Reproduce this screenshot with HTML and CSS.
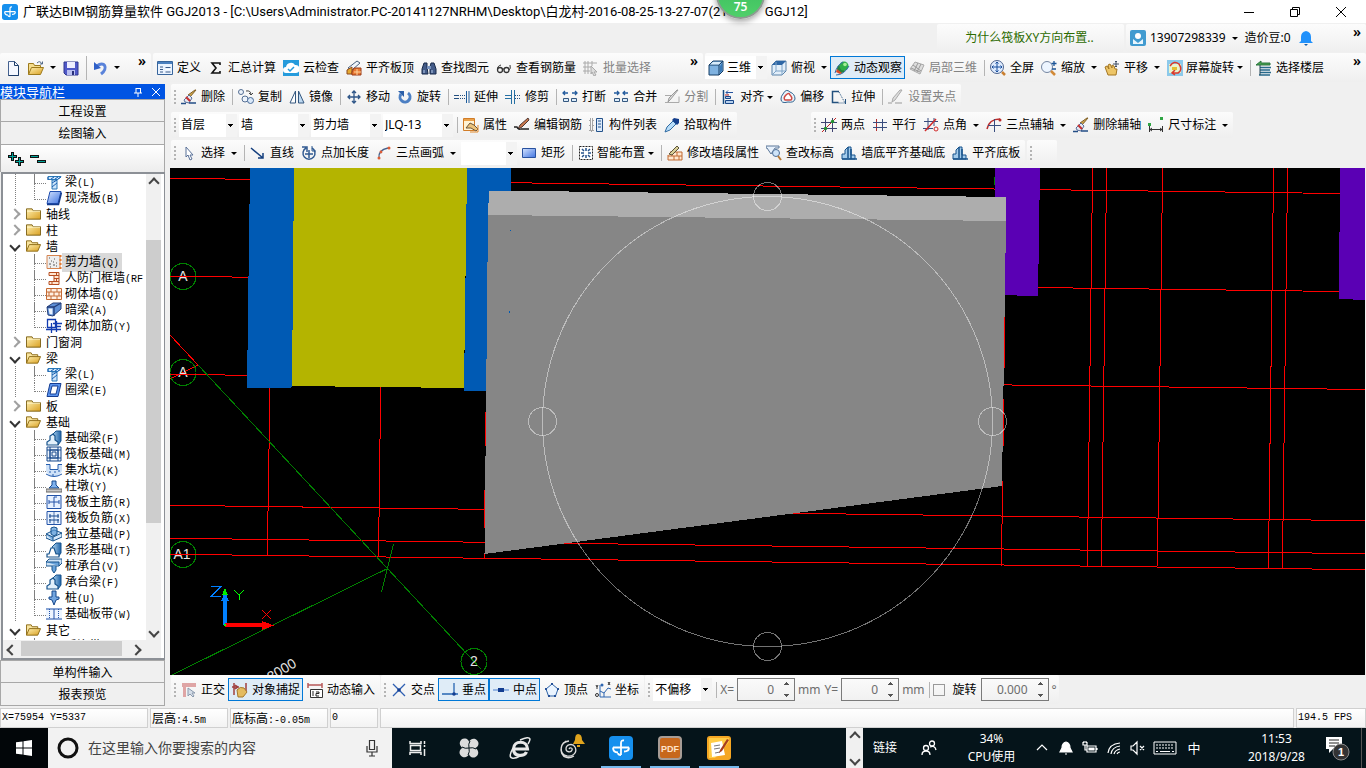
FILE: index.html
```html
<!DOCTYPE html>
<html lang="zh-CN">
<head>
<meta charset="utf-8">
<title>广联达BIM钢筋算量软件 GGJ2013</title>
<link rel="stylesheet" href="styles.css">
</head>
<body>
<svg class="sprite" aria-hidden="true">
<defs>
<linearGradient id="g-fold" x1="0" y1="0" x2="1" y2="1"><stop offset="0" stop-color="#fff0b0"/><stop offset="1" stop-color="#d9a022"/></linearGradient>
<linearGradient id="g-blue" x1="0" y1="0" x2="1" y2="1"><stop offset="0" stop-color="#d5e4ff"/><stop offset="1" stop-color="#3f73e0"/></linearGradient>
<linearGradient id="g-steel" x1="0" y1="0" x2="1" y2="0"><stop offset="0" stop-color="#b5d9f2"/><stop offset="1" stop-color="#1d62a8"/></linearGradient>
</defs>
<symbol id="logo" viewBox="0 0 24 24"><rect width="24" height="24" rx="4" fill="#1690ee"/><path d="M15 4.500Q12 4 12 7v12M4 11.500h16M4 11.500q0 5 5 5M20 11.500q0 4-5 4M12 19q-3 0-3-2" fill="none" stroke="#fff" stroke-width="1.800"/></symbol>
<symbol id="new" viewBox="0 0 16 16"><path d="M3.500 1.500h6l4 4v10h-10z" fill="#f5f8ff" stroke="#44618f"/><path d="M9.500 1.500v4h4M13.500 6v9.500h-10" fill="none" stroke="#1d3c68"/></symbol>
<symbol id="open" viewBox="0 0 16 16"><path d="M.5 14.500v-11h5l1 2h6v3" fill="#f5dd8d" stroke="#9d7a1c"/><path d="M.5 14.500l3-7h12l-3 7z" fill="url(#g-fold)" stroke="#9d7a1c"/><path d="M9 3q3-3 5 1M12 4h2.500V1.500" fill="none" stroke="#536a88"/></symbol>
<symbol id="save" viewBox="0 0 16 16"><path d="M1 2h14v13H3l-2-2z" fill="#4f58c8" stroke="#30378e"/><path d="M4 2h8v6H4z" fill="#eef"/><path d="M4 10h8v5H4z" fill="#b9bff0"/><path d="M9 11h2v4H9z" fill="#272e78"/></symbol>
<symbol id="undo" viewBox="0 0 16 16"><path d="M5 6c7-6 12 2 4 8" fill="none" stroke="#5a83da" stroke-width="3"/><path d="M2 2v8l7-2z" fill="#2f60c8"/></symbol>
<symbol id="form" viewBox="0 0 16 16"><path d="M.5 1.500h15v13H.5z" fill="#eaf3ff" stroke="#37659c"/><path d="M1 2h14v2H1z" fill="#4a80bf"/><path d="M3 7h3M3 9.500h3M3 12h3M8.500 7.500h5M8.500 12h5" stroke="#3a5a88"/><path d="M8.500 9.500h5" stroke="#fff"/></symbol>
<symbol id="sigma" viewBox="0 0 16 16"><path d="M12 5V3H4l4 5-4 5h8v-2" fill="none" stroke="#111" stroke-width="1.600"/></symbol>
<symbol id="cloud" viewBox="0 0 16 16"><path d="M0 0h16v16H0z" fill="#259bdc"/><path d="M3 13a3 3 0 0 1 0-6 5 5 0 0 1 9-2 4 4 0 0 1 1 8z" fill="#fff"/><path d="M5 9l2 2 4-4" stroke="#259bdc" stroke-width="1.500" fill="none"/></symbol>
<symbol id="flush" viewBox="0 0 16 16"><path d="M2 8l9-7 3 2-8 7z" fill="#eef4fb" stroke="#49617e"/><path d="M1 10l5-3v7H1z" fill="#e5aa32" stroke="#8d481c"/><path d="M8 8h7v7H6v-3z" fill="#e87a35" stroke="#993b18"/><path d="M8 12h7M11 9v6" stroke="#ffd49e"/></symbol>
<symbol id="find" viewBox="0 0 16 16"><path d="M3 3h3v4l1 7H1V9zM10 3h3l2 6v5H9V7z" fill="#435b88" stroke="#172948"/><path d="M6 6h4v3H6z" fill="#7892be"/><path d="M3 10v3M11 10v3" stroke="#b7cbe8"/></symbol>
<symbol id="glasses" viewBox="0 0 16 16"><circle cx="4" cy="10" r="2.500" fill="none" stroke="#333" stroke-width="1.300"/><circle cx="10.500" cy="10" r="2.500" fill="none" stroke="#333" stroke-width="1.300"/><path d="M1.500 10Q1 6 5 5M13 10q2-1 1-5M6 9h2" fill="none" stroke="#333"/></symbol>
<symbol id="batch" viewBox="0 0 16 16"><path d="M2 1v13M5 1v13M0 3h14M0 7h9M0 11h7M9 1v5" stroke="#aaa" fill="none"/><path d="M8 6l6 6h-3l2 3-2 1-2-4-1 2z" fill="#ddd" stroke="#aaa"/></symbol>
<symbol id="cube" viewBox="0 0 16 16"><path d="M1 5l4-4h10v10l-4 4H1z" fill="#7fb2e0" stroke="#163e66"/><path d="M1 5h10v10M11 5l4-4" fill="none" stroke="#163e66"/><path d="M2 4.500L5 2h8l-2 2.500z" fill="#d9ecfa"/><path d="M12 6l2-3v8l-2 2z" fill="#3879b8"/></symbol>
<symbol id="cubetop" viewBox="0 0 16 16"><path d="M1 5l4-4h10v10l-4 4H1z" fill="#e3effa" stroke="#5881a8"/><path d="M1 5l4-4h10l-4 4z" fill="#2d66a5"/><path d="M11 5v10M5 2v9h9M5 11l-4 4" stroke="#7ea4c7" fill="none"/></symbol>
<symbol id="orbit" viewBox="0 0 16 16"><circle cx="7" cy="9" r="4" fill="#27803f"/><circle cx="10" cy="6" r="4.500" fill="#2fae48"/><circle cx="11" cy="4.500" r="1.800" fill="#a6ef98"/><path d="M1 13Q3 5 9 2M2 15q8 0 13-9" fill="none" stroke="#326da8"/><path d="M3 9l5 4-2 1-4-2z" fill="#d94b28"/></symbol>
<symbol id="local" viewBox="0 0 16 16"><path d="M1 9l5-7 9 3-4 9z" fill="#ddd" stroke="#aaa"/><path d="M4 5l8 6M9 3L5 11M12 4l-4 8M2 8l9 4" stroke="#999"/></symbol>
<symbol id="full" viewBox="0 0 16 16"><circle cx="7" cy="7" r="6.500" fill="#dfecff" stroke="#50658d"/><path d="M7 2v10M2 7h10M5.500 3.500L7 2l1.500 1.500M5.500 10.500L7 12l1.500-1.500M3.500 5.500L2 7l1.500 1.500M10.500 5.500L12 7l-1.500 1.500" stroke="#194f9d" fill="none"/><path d="M12 12l3 3" stroke="#c98032" stroke-width="2.500"/></symbol>
<symbol id="zoomi" viewBox="0 0 16 16"><circle cx="6" cy="7" r="5.500" fill="#edf5ff" stroke="#7485a0"/><path d="M10 11l4 4" stroke="#d28a37" stroke-width="2.500"/><path d="M13 1v5M10.500 3.500h5M11 9h4" stroke="#1b5497" stroke-width="1.300"/></symbol>
<symbol id="hand" viewBox="0 0 16 16"><path d="M1 7l2-1 2 3-1-4 2-1 2 4 0-3 2 1 1 3 2 0-1 6H4z" fill="#edc567" stroke="#a47622"/><path d="M12 1v6M9 4h6M11 2l1-1 1 1M11 6l1 1 1-1" stroke="#3e4d63" fill="none"/></symbol>
<symbol id="screen" viewBox="0 0 16 16"><path d="M0 0h16v16H0z" fill="#8cc9ea"/><path d="M2 4h12v9H2z" fill="#e8f4cf"/><path d="M3 6q4-6 9-2 4 6-1 9H6M8 10l-3 3 3 2" fill="none" stroke="#db392b" stroke-width="1.500"/><path d="M5 7h5v3H5z" fill="#e4bf33"/></symbol>
<symbol id="floors" viewBox="0 0 16 16"><path d="M0 5l5-4v2h9v2z" fill="#45a34b" stroke="#2c7440"/><path d="M4 7.500h11M4 10h10M4 12.500h11M3 15h11" stroke="#276a8c" stroke-width="1.300"/><path d="M4 5v10" stroke="#245"/></symbol>
<symbol id="brush" viewBox="0 0 16 16"><path d="M15 1l-6 7-2-2 7-5z" fill="#cda44b" stroke="#816129"/><path d="M8 6l3 3-3 5-4-1-1-2z" fill="#e5e8f1" stroke="#586e9a"/><path d="M5 8l4 4" stroke="#c52e2e" stroke-width="2"/><path d="M0 14.500h5M8 14h7" stroke="#234e86" stroke-width="1.500"/></symbol>
<symbol id="copy" viewBox="0 0 16 16"><circle cx="3" cy="3" r="2.500" fill="#edf3fb" stroke="#556f94"/><circle cx="7" cy="10" r="3" fill="#edf3fb" stroke="#556f94"/><circle cx="12.500" cy="11.500" r="3" fill="#d9e8f8" stroke="#496b98"/><path d="M8 2q5-1 5 4M11 4l2 2 2-2" fill="none" stroke="#444"/></symbol>
<symbol id="mirror" viewBox="0 0 16 16"><path d="M6.500 2v12H1z" fill="#fff" stroke="#34577f"/><path d="M9.500 2v12H15z" fill="#bfdaf2" stroke="#34577f"/></symbol>
<symbol id="move" viewBox="0 0 16 16"><path d="M8 2v12M2 8h12M6 4l2-2 2 2M6 12l2 2 2-2M4 6L2 8l2 2M12 6l2 2-2 2" fill="none" stroke="#2f5688" stroke-width="1.300"/></symbol>
<symbol id="rotate" viewBox="0 0 16 16"><path d="M4 5a5 5 0 1 0 7-1" fill="none" stroke="#4c7fc3" stroke-width="3"/><path d="M1 2h6v6z" fill="#2c5fa8"/></symbol>
<symbol id="extend" viewBox="0 0 16 16"><path d="M0 6.500h5M0 9.500h5" stroke="#234f80"/><path d="M6 6.500h5M6 9.500h5" stroke="#234f80" stroke-dasharray="1 1"/><path d="M12.500 2v12M15 2v12" stroke="#1f5d9c"/></symbol>
<symbol id="trim" viewBox="0 0 16 16"><path d="M0 6.500h6M0 9.500h6M6.500 1v14M9.500 1v14" stroke="#2670a3"/><path d="M10 6.500h6M10 9.500h6" stroke="#234f80" stroke-dasharray="1 1"/></symbol>
<symbol id="break" viewBox="0 0 16 16"><path d="M1 4h5M3 2L1 4l2 2M10 4h5M13 2l2 2-2 2" fill="none" stroke="#245c9e" stroke-width="1.300"/><path d="M1.500 9.500h5v3h-5zM9.500 9.500h5v3h-5z" fill="#dcecfa" stroke="#34577f"/></symbol>
<symbol id="merge" viewBox="0 0 16 16"><path d="M1 4h5M4 2l2 2-2 2M10 4h5M12 2l-2 2 2 2" fill="none" stroke="#245c9e" stroke-width="1.300"/><path d="M1.500 9.500h5v3h-5zM9.500 9.500h5v3h-5z" fill="#dcecfa" stroke="#34577f"/></symbol>
<symbol id="split" viewBox="0 0 16 16"><path d="M1 6.500h8M1 13.500h14v-6" fill="none" stroke="#aaa"/><path d="M14 1L6 11l-2 2 1-4 8-8z" fill="#ddd" stroke="#999"/></symbol>
<symbol id="align" viewBox="0 0 16 16"><path d="M2.500 1v14" stroke="#134a80" stroke-width="1.500"/><path d="M5 3.500h7M7 1.500l-2 2 2 2" fill="none" stroke="#2453a0"/><path d="M4.500 7.500h5v2h-5zM4.500 11.500h8v3h-8z" fill="#b7d1ee" stroke="#174688"/><path d="M4 6h4" stroke="#b22"/></symbol>
<symbol id="offset" viewBox="0 0 16 16"><path d="M3 5q3-6 7-2 5 2 5 7-1 4-7 3-7 2-7-3 0-3 2-5z" fill="#eaf2fa" stroke="#31648f"/><path d="M6 6q3-3 4 0 3 3 1 5H5Q3 9 6 6z" fill="#fff" stroke="#cf4a43" stroke-width="1.500"/></symbol>
<symbol id="stretch" viewBox="0 0 16 16"><path d="M8 2.500H1.500v11h6" fill="none" stroke="#23517e" stroke-width="1.500"/><path d="M8 3l6 11H7" fill="none" stroke="#23517e" stroke-dasharray="1 1"/><path d="M14.500 10v5" stroke="#23517e"/></symbol>
<symbol id="gripi" viewBox="0 0 16 16"><path d="M0 14h4M7 14h7" stroke="#999"/><path d="M14 1L7 11l-3 2 1-4 7-8z" fill="#ddd" stroke="#aaa"/></symbol>
<symbol id="props" viewBox="0 0 16 16"><path d="M.5 1.500h11v12H.5z" fill="#fff3d4" stroke="#d17c27"/><path d="M1 2h10v2H1z" fill="#eaa14a"/><path d="M3 11l4-5 4 2 4 4-2 2-5-3z" fill="#ecc37b" stroke="#6a5438"/><path d="M7 15h8V8" fill="none" stroke="#e38b2c"/></symbol>
<symbol id="pen" viewBox="0 0 16 16"><path d="M4 12l2-4L14 1l1 2-7 7z" fill="#c9774c" stroke="#503a35"/><path d="M0 10h3q1 3 4 2h8" fill="none" stroke="#222" stroke-width="1.300"/></symbol>
<symbol id="list" viewBox="0 0 16 16"><path d="M1 2h3v3H1zM1 7h3v3H1zM1 12h3v2H1z" fill="none" stroke="#555" stroke-dasharray="1 1"/><path d="M7.500 1.500h6v13h-6z" fill="#dceafa" stroke="#24528b"/><path d="M9 4h3M9 7h3M9 10h3" stroke="#24528b"/></symbol>
<symbol id="pick" viewBox="0 0 16 16"><path d="M3 10l6-6 3 3-6 6-5 2z" fill="#b7dcf8" stroke="#2f6ba2"/><path d="M8 3l2-2 5 1 0 4-2 2z" fill="#143e8c"/></symbol>
<symbol id="twopt" viewBox="0 0 16 16"><path d="M4.500 1v14M11.500 1v14M0 5.500h16M0 11.500h16" stroke="#3f4370"/><path d="M1 15L15 1" stroke="#c02020"/><circle cx="4.500" cy="11.500" r="1.700" fill="#209330"/><circle cx="11.500" cy="4.500" r="1.700" fill="#209330"/></symbol>
<symbol id="grid" viewBox="0 0 16 16"><path d="M4.500 2v12" stroke="#b22c2c"/><path d="M10.500 2v12M1 5.500h14M1 10.500h14" stroke="#394d7e"/></symbol>
<symbol id="angle" viewBox="0 0 16 16"><path d="M5 1v12M11 1v8M1 4.500h14M0 11.500h10" stroke="#394d7e"/><path d="M2 14L13 2" stroke="#d12a2a" stroke-width="1.500"/><circle cx="13" cy="12" r="2" fill="none" stroke="#d12a2a"/></symbol>
<symbol id="arcaxis" viewBox="0 0 16 16"><path d="M1 12Q3 2 14 2" fill="none" stroke="#bb2b2b" stroke-width="1.500"/><path d="M8.500 2v13M2 8.500h13" stroke="#394d7e"/><circle cx="14" cy="3" r="1.500" fill="#bb2b2b"/></symbol>
<symbol id="dim" viewBox="0 0 16 16"><path d="M1.500 9v6M14.500 9v6M2 12.500h12M4 11l-2 1.500L4 14M12 11l2 1.500-2 1.500" fill="none" stroke="#333"/><path d="M0 6h3v3H0zM12 0h3v3h-3z" fill="#2fa544"/></symbol>
<symbol id="arrow" viewBox="0 0 16 16"><path d="M5 2v10l2-2 2 5 2-1-2-4h3z" fill="#fff" stroke="#597098"/></symbol>
<symbol id="line" viewBox="0 0 16 16"><path d="M1 3l12 10M13 8v5H8" fill="none" stroke="#133e7d" stroke-width="1.500"/></symbol>
<symbol id="ptlen" viewBox="0 0 16 16"><path d="M5 3a6 6 0 1 0 6 0M1 2h5v5M8 5v8M4 9h8" fill="none" stroke="#315a91" stroke-width="1.500"/><path d="M11 1v5h4" fill="none" stroke="#315a91"/></symbol>
<symbol id="arc" viewBox="0 0 16 16"><path d="M3 13Q2 5 12 3" fill="none" stroke="#46618c" stroke-width="1.300"/><circle cx="3" cy="13" r="1.500" fill="#dc5c36"/><circle cx="13" cy="3" r="1.500" fill="#dc5c36"/><circle cx="5" cy="7" r="1.400" fill="#dc5c36"/></symbol>
<symbol id="rect" viewBox="0 0 16 16"><path d="M1.500 3.500h13v9h-13z" fill="url(#g-blue)" stroke="#28519f"/></symbol>
<symbol id="smart" viewBox="0 0 16 16"><path d="M1.500 1.500h13v13h-13z" fill="#fff" stroke="#222" stroke-dasharray="2 1"/><path d="M8 3v3M8 10v3M3 8h3M10 8h3M4 4l2 2M12 4l-2 2M4 12l2-2M12 12l-2-2" stroke="#24528b" stroke-width="1.500"/></symbol>
<symbol id="wallmod" viewBox="0 0 16 16"><path d="M3 7h12v8H1v-5" fill="#ffe8d0" stroke="#c26a33"/><path d="M1 11h14M5 7v4M10 7v4M7 11v4M12 11v4" stroke="#c26a33"/><path d="M2 9l8-8 2 2-7 7z" fill="#d8ce97" stroke="#5b543b"/></symbol>
<symbol id="elev" viewBox="0 0 16 16"><path d="M0 1h13v2H9l-4 6-4-6H0z" fill="#e7f1fc" stroke="#5b7698"/><circle cx="10" cy="8" r="3.500" fill="#cfe4f8" stroke="#4e6f97"/><path d="M12 11l3 4" stroke="#b77a36" stroke-width="2"/></symbol>
<symbol id="base" viewBox="0 0 16 16"><path d="M1 14V9h3V5l3-3h3v8h4v4z" fill="#a3cbeb" stroke="#17538c"/><path d="M7 2v11M10 4v10M1 14h15" stroke="#17538c" stroke-width="1.500"/></symbol>
<symbol id="ortho" viewBox="0 0 16 16"><path d="M1 1h14v4H5v10H2V5H1z" fill="#dfa5a5"/><path d="M7 6v8l2-2 3 3 1-1-2-3h3z" fill="#d6dee8" stroke="#8b9aae"/></symbol>
<symbol id="snap" viewBox="0 0 16 16"><path d="M2 1v12M14 1v8M0 5h7M3 3l3 2-3 2" stroke="#a14040" fill="none" stroke-width="1.500"/><path d="M5 8q3-4 7-2l3 4-4 5H6z" fill="#e4bc61" stroke="#a5792d"/></symbol>
<symbol id="dyn" viewBox="0 0 16 16"><path d="M1 1v5M15 1v5M1 3h14" stroke="#b85a5a" stroke-width="1.500"/><path d="M3.500 7.500h12v8h-12z" fill="#fff" stroke="#333"/><path d="M6 9v5M9 10h3v1.500H9V14h3" fill="none" stroke="#222"/></symbol>
<symbol id="cross" viewBox="0 0 16 16"><path d="M2 2l12 12M14 2L2 14" stroke="#2f60b2" stroke-width="1.300"/><circle cx="8" cy="8" r="1.800" fill="#123d91"/></symbol>
<symbol id="perp" viewBox="0 0 16 16"><path d="M12 1v11M0 12h16" stroke="#2765b2" stroke-width="1.300"/><circle cx="12" cy="12" r="1.800" fill="#123d91"/></symbol>
<symbol id="mid" viewBox="0 0 16 16"><path d="M0 8h16" stroke="#7da3dc" stroke-width="1.500"/><path d="M5 6h6v4H5z" fill="#123d91"/></symbol>
<symbol id="vertex" viewBox="0 0 16 16"><path d="M8 2l6 5-2.500 7h-7L2 7z" fill="#eaf4ff" stroke="#2d62a7"/><path d="M7 1h2v2H7zM1 6h2v2H1zM13 6h2v2h-2zM4 13h2v2H4zM10 13h2v2h-2z" fill="#234f97"/></symbol>
<symbol id="coord" viewBox="0 0 16 16"><path d="M5 3v12h11M5 9l4 2 4-5M9 11v4M13 6l3 1" fill="none" stroke="#2d65b0"/><path d="M1 3l1 2 1-2M2 5v2M13 0l2 3M15 0l-2 3" stroke="#333" fill="none"/><circle cx="2" cy="13" r="1.500" fill="none" stroke="#333"/><circle cx="7" cy="3" r="1.500" fill="#2d65b0"/></symbol>
<symbol id="folder" viewBox="0 0 16 16"><path d="M.5 13.500v-11h6l1 2h8v9z" fill="url(#g-fold)" stroke="#7c6015"/><path d="M1 5h14" stroke="#fff5c9"/></symbol>
<symbol id="folderopen" viewBox="0 0 16 16"><path d="M.5 13.500v-11h5l1 2h6v3" fill="#f8e49f" stroke="#8c6a14"/><path d="M.5 13.500l3-7h12l-3 7z" fill="url(#g-fold)" stroke="#8c6a14"/></symbol>
<symbol id="beam" viewBox="0 0 16 16"><path d="M2 2.500h13l-3 3H2zM6 6h5v9H6z" fill="#cde6fb" stroke="#2a78b8"/><path d="M12 5l3-2M6 9l5-3M6 13l5-4M5 5l3-2M9 5l3-2M2 3v3" stroke="#1a5fb0"/></symbol>
<symbol id="slab" viewBox="0 0 16 16"><path d="M4 1.500h11l-3 12H1z" fill="url(#g-blue)" stroke="#204dad"/><path d="M1 14.500h11.500l3-12" fill="none" stroke="#133b8e" stroke-width="1.500"/></symbol>
<symbol id="ring" viewBox="0 0 16 16"><path d="M4 1.500h11l-3 13H1z" fill="#5b94ee" stroke="#153d91"/><path d="M6 4h6l-2 8H4z" fill="#fff" stroke="#153d91"/></symbol>
<symbol id="shear" viewBox="0 0 16 16"><path d="M1 1.500h13v13H1z" fill="#eee" stroke="#d58450"/><path d="M3 4h1M8 5h1M5 7h1M10 9h1M3 10h2M7 11h2M4 13h1M10 12h1M7 8h1" stroke="#555"/><path d="M14.500 1v15" stroke="#e57b2f" stroke-width="2" stroke-dasharray="2 2"/></symbol>
<symbol id="frame" viewBox="0 0 16 16"><path d="M3 2.500h10v12H3v-3h5v-6H3z" fill="#ffe6d0" stroke="#b74e20"/><path d="M8 5.500h5M8 8.500h5M8 11.500h5M10.500 2v3M6 12v3M10.500 9v3" stroke="#b74e20"/></symbol>
<symbol id="brick" viewBox="0 0 16 16"><path d="M.5 2.500h15v11H.5z" fill="#fff0e2" stroke="#c46a34"/><path d="M1 6h14M1 10h14M5 2v4M11 2v4M3 6v4M8 6v4M13 6v4M5 10v4M11 10v4" stroke="#c46a34"/></symbol>
<symbol id="hidden" viewBox="0 0 16 16"><path d="M1 5l6-4h8v6l-8 7-5-1z" fill="#5d8fd6" stroke="#233e79"/><path d="M1 5h7l7-4M8 5v9" fill="none" stroke="#233e79" stroke-width="1.300"/><path d="M2.500 6.500h4v6l-3-.5z" fill="#eaf2fc"/></symbol>
<symbol id="rebar" viewBox="0 0 16 16"><path d="M1.500 1.500h8v8h-8zM0 11.500h15M5.500 5v10M10.500 3v11M7 5.500h9M10 8.500h5" stroke="#123cb0" fill="none" stroke-width="1.300"/></symbol>
<symbol id="fbeam" viewBox="0 0 16 16"><path d="M6 5l4-4h5v10l-3 4z" fill="url(#g-steel)" stroke="#17538c"/><path d="M1 15v-3l3-2V6l3-2 2 2v4l3 2v3z" fill="#e2f0fb" stroke="#17538c" stroke-width="1.200"/></symbol>
<symbol id="raft" viewBox="0 0 16 16"><path d="M1 1h14v14H1zM4 4h8v8H4zM4 1v14M12 1v14M1 4h14M1 12h14M6 6h4v4H6z" fill="#dceafa" fill-opacity=".5" stroke="#17488c"/></symbol>
<symbol id="pit" viewBox="0 0 16 16"><path d="M0 2h4v5h8V2h4v7q-3 6-8 6T0 9z" fill="#cfe2f8"/><path d="M0 2.500h4v5h8v-5h4M0 12q8 5 16 0" stroke="#255dae" fill="none"/><path d="M3 10h2M8 10h2M12 9h2M6 13h2" stroke="#255dae"/></symbol>
<symbol id="pier" viewBox="0 0 16 16"><path d="M6 3h4v4l3 3H3l3-3z" fill="#7fb2ee" stroke="#17488c"/><path d="M0 11h16v3H0z" fill="#c6c6c6" stroke="#666"/></symbol>
<symbol id="mainbar" viewBox="0 0 16 16"><path d="M1 1.500h14v13H1z" fill="#e7f1ff" stroke="#2253a8"/><path d="M3 8h10M8 3v10M3 6v4M13 6v4M8 3h3" stroke="#2253a8" fill="none"/></symbol>
<symbol id="negbar" viewBox="0 0 16 16"><path d="M1 1.500h14v13H1z" fill="#e7f1ff" stroke="#2253a8"/><path d="M7 2h2v12H7z" fill="#9eb4d6"/><path d="M3 6h10M3 10h10M4 4v4M12 4v4M4 9v4M12 9v4" stroke="#17488c"/></symbol>
<symbol id="isol" viewBox="0 0 16 16"><path d="M0 8l8-4 8 3v4l-9 4-7-3z" fill="#d6e9fa" stroke="#17538c"/><path d="M5 2l3-1 3 1v6l-3 2-3-2zM7 11l9-4M0 8l7 3v4" fill="#5899d5" fill-opacity=".7" stroke="#17538c"/></symbol>
<symbol id="strip" viewBox="0 0 16 16"><path d="M6 5l4-4h5v10l-3 4z" fill="url(#g-steel)" stroke="#17538c"/><path d="M1 15v-3h2l2-6h3l2 6h3v3z" fill="#fff" stroke="#17538c" stroke-width="1.200"/></symbol>
<symbol id="cap" viewBox="0 0 16 16"><path d="M0 4l3-3h13v4l-3 3H0z" fill="#cfe3f6" stroke="#17538c"/><path d="M0 4h13v4M6 8v4l2 3 2-3V8" fill="#6aa3da" stroke="#17538c"/></symbol>
<symbol id="pile" viewBox="0 0 16 16"><path d="M6 1h4v6h3v2l-3 1-2 5-2-5-3-1V7h3z" fill="#72a5df" stroke="#17488c"/></symbol>
<symbol id="band" viewBox="0 0 16 16"><path d="M0 2h16v12H0z" fill="#edf5ff"/><path d="M0 3h16M0 13h16M8 3v10" stroke="#2253a8"/><path d="M3.500 3v10M12.500 3v10" stroke="#2253a8" stroke-dasharray="1 1"/></symbol>
</svg>

<div class="app">
<header class="titlebar">
  <svg class="ico"><use href="#logo"/></svg>
  <h1><span>广联达BIM钢筋算量软件 GGJ2013 - [C:\Users\Administrator.PC-20141127NRHM\Desktop\白龙村-2016-08-25-13-27-07(216</span><span>GGJ12]</span></h1>
  <span class="badge">75</span>
  <div class="winbtns">
    <button aria-label="最小化"><svg viewBox="0 0 12 12"><path d="M1 6.500h10"/></svg></button>
    <button aria-label="还原"><svg viewBox="0 0 12 12"><path d="M1.500 3.500h7v7h-7zM3.500 3.500v-2h7v7h-2"/></svg></button>
    <button aria-label="关闭"><svg viewBox="0 0 12 12"><path d="M1 1l10 10M11 1L1 11"/></svg></button>
  </div>
</header>

<div class="bar menubar">
  <a class="group tip" href="#">为什么筏板XY方向布置..</a>
  <div class="group account">
    <button class="tool"><svg class="ico" viewBox="0 0 16 16"><rect width="16" height="16" rx="2" fill="#419bd0"/><circle cx="8" cy="6" r="3" fill="#fff"/><path d="M3 9l5 4 5-4v5H3z" fill="#e8f5fd"/></svg>13907298339<i class="caret"></i></button>
    <button class="tool">造价豆:0</button>
    <button class="tool" aria-label="消息"><svg class="ico" viewBox="0 0 16 16"><path d="M8 1q5 1 5 6v4l2 2H1l2-2V7q0-5 5-6z" fill="#2191fb"/><path d="M6 14h4l-2 2z" fill="#135fac"/></svg></button>
    <button class="more">»</button>
  </div>
</div>

<div class="bar mainbar">
  <div class="group file">
    <button class="tool" aria-label="新建"><svg class="ico"><use href="#new"/></svg></button>
    <button class="tool" aria-label="打开"><svg class="ico"><use href="#open"/></svg><i class="caret"></i></button>
    <button class="tool" aria-label="保存"><svg class="ico"><use href="#save"/></svg></button>
    <i class="sep"></i>
    <button class="tool" aria-label="撤销"><svg class="ico"><use href="#undo"/></svg><i class="caret"></i></button>
    <button class="more">»</button>
  </div>
  <div class="group calc">
    <button class="tool"><svg class="ico"><use href="#form"/></svg>定义</button>
    <button class="tool"><svg class="ico"><use href="#sigma"/></svg>汇总计算</button>
    <button class="tool"><svg class="ico"><use href="#cloud"/></svg>云检查</button>
    <button class="tool"><svg class="ico"><use href="#flush"/></svg>平齐板顶</button>
    <button class="tool"><svg class="ico"><use href="#find"/></svg>查找图元</button>
    <button class="tool"><svg class="ico"><use href="#glasses"/></svg>查看钢筋量</button>
    <button class="tool" disabled><svg class="ico"><use href="#batch"/></svg>批量选择</button>
    <button class="more">»</button>
  </div>
  <div class="group view">
    <label class="combo with-icon"><svg class="ico"><use href="#cube"/></svg><select aria-label="视图"><option>三维</option></select></label>
    <button class="tool"><svg class="ico"><use href="#cubetop"/></svg>俯视<i class="caret"></i></button>
    <button class="tool on"><svg class="ico"><use href="#orbit"/></svg>动态观察</button>
    <button class="tool" disabled><svg class="ico"><use href="#local"/></svg>局部三维</button>
    <i class="sep"></i>
    <button class="tool"><svg class="ico"><use href="#full"/></svg>全屏</button>
    <button class="tool"><svg class="ico"><use href="#zoomi"/></svg>缩放<i class="caret"></i></button>
    <button class="tool"><svg class="ico"><use href="#hand"/></svg>平移<i class="caret"></i></button>
    <button class="tool tight"><svg class="ico"><use href="#screen"/></svg>屏幕旋转<i class="caret"></i></button>
    <i class="sep"></i>
    <button class="tool"><svg class="ico"><use href="#floors"/></svg>选择楼层</button>
    <button class="more">»</button>
  </div>
</div>

<div class="body">
<aside class="side">
  <div class="side-head"><h2>模块导航栏</h2>
    <button aria-label="固定"><svg viewBox="0 0 10 10"><path d="M3 1v5M7.500 1v5M3 1.500h4M1 6h8M5 6v4"/></svg></button>
    <button aria-label="关闭导航栏"><svg viewBox="0 0 10 10"><path d="M1 1l8 8M9 1L1 9"/></svg></button></div>
  <button class="sect">工程设置</button>
  <button class="sect">绘图输入</button>
  <div class="expand">
    <button aria-label="全部展开"><svg viewBox="0 0 18 16"><path d="M1 5.500h9M5.500 1v9M8 10.500h9M12.500 6v9" stroke="#111" stroke-width="3"/><path d="M2 5.500h7M5.500 2v7M9 10.500h7M12.500 7v7" stroke="#00a59b"/></svg></button>
    <button aria-label="全部折叠"><svg viewBox="0 0 18 16"><path d="M1 5.500h9M8 10.500h9" stroke="#111" stroke-width="3"/><path d="M2 5.500h7M9 10.500h7" stroke="#00a59b"/></svg></button>
  </div>
  <div class="treebox">
    <div class="treerow">
    <ul class="tree">
      <li><ul class="sub">
        <li><svg class="ico"><use href="#beam"/></svg><span>梁<b>(L)</b></span></li>
        <li><svg class="ico"><use href="#slab"/></svg><span>现浇板<b>(B)</b></span></li></ul></li>
      <li><div class="node"><i class="tw"></i><svg class="ico"><use href="#folder"/></svg><span>轴线</span></div></li>
      <li><div class="node"><i class="tw"></i><svg class="ico"><use href="#folder"/></svg><span>柱</span></div></li>
      <li><div class="node"><i class="tw down"></i><svg class="ico"><use href="#folderopen"/></svg><span>墙</span></div>
        <ul class="sub">
        <li class="sel"><svg class="ico"><use href="#shear"/></svg><span>剪力墙<b>(Q)</b></span></li>
        <li><svg class="ico"><use href="#frame"/></svg><span>人防门框墙<b>(RF</b></span></li>
        <li><svg class="ico"><use href="#brick"/></svg><span>砌体墙<b>(Q)</b></span></li>
        <li><svg class="ico"><use href="#hidden"/></svg><span>暗梁<b>(A)</b></span></li>
        <li><svg class="ico"><use href="#rebar"/></svg><span>砌体加筋<b>(Y)</b></span></li></ul></li>
      <li><div class="node"><i class="tw"></i><svg class="ico"><use href="#folder"/></svg><span>门窗洞</span></div></li>
      <li><div class="node"><i class="tw down"></i><svg class="ico"><use href="#folderopen"/></svg><span>梁</span></div>
        <ul class="sub">
        <li><svg class="ico"><use href="#beam"/></svg><span>梁<b>(L)</b></span></li>
        <li><svg class="ico"><use href="#ring"/></svg><span>圈梁<b>(E)</b></span></li></ul></li>
      <li><div class="node"><i class="tw"></i><svg class="ico"><use href="#folder"/></svg><span>板</span></div></li>
      <li><div class="node"><i class="tw down"></i><svg class="ico"><use href="#folderopen"/></svg><span>基础</span></div>
        <ul class="sub">
        <li><svg class="ico"><use href="#fbeam"/></svg><span>基础梁<b>(F)</b></span></li>
        <li><svg class="ico"><use href="#raft"/></svg><span>筏板基础<b>(M)</b></span></li>
        <li><svg class="ico"><use href="#pit"/></svg><span>集水坑<b>(K)</b></span></li>
        <li><svg class="ico"><use href="#pier"/></svg><span>柱墩<b>(Y)</b></span></li>
        <li><svg class="ico"><use href="#mainbar"/></svg><span>筏板主筋<b>(R)</b></span></li>
        <li><svg class="ico"><use href="#negbar"/></svg><span>筏板负筋<b>(X)</b></span></li>
        <li><svg class="ico"><use href="#isol"/></svg><span>独立基础<b>(P)</b></span></li>
        <li><svg class="ico"><use href="#strip"/></svg><span>条形基础<b>(T)</b></span></li>
        <li><svg class="ico"><use href="#cap"/></svg><span>桩承台<b>(V)</b></span></li>
        <li><svg class="ico"><use href="#fbeam"/></svg><span>承台梁<b>(F)</b></span></li>
        <li><svg class="ico"><use href="#pile"/></svg><span>桩<b>(U)</b></span></li>
        <li><svg class="ico"><use href="#band"/></svg><span>基础板带<b>(W)</b></span></li></ul></li>
      <li><div class="node"><i class="tw down"></i><svg class="ico"><use href="#folderopen"/></svg><span>其它</span></div>
        <ul class="sub"><li><i class="ico"></i><span>后浇带<b>(JD)</b></span></li><li></li></ul></li>
    </ul>
    <div class="vscroll"><i class="chev up"></i><div class="track"><div class="thumb"></div></div><i class="chev dn"></i></div>
    </div>
    <div class="hscroll"><i class="chev lf"></i><div class="track"><div class="thumb"></div></div><i class="chev rt"></i></div>
  </div>
  <button class="sect">单构件输入</button>
  <button class="sect">报表预览</button>
</aside>

<main class="main">
  <div class="bar"><div class="group"><i class="grip"></i>
    <button class="tool"><svg class="ico"><use href="#brush"/></svg>删除</button><i class="sep"></i>
    <button class="tool"><svg class="ico"><use href="#copy"/></svg>复制</button>
    <button class="tool"><svg class="ico"><use href="#mirror"/></svg>镜像</button><i class="sep"></i>
    <button class="tool"><svg class="ico"><use href="#move"/></svg>移动</button>
    <button class="tool"><svg class="ico"><use href="#rotate"/></svg>旋转</button><i class="sep"></i>
    <button class="tool"><svg class="ico"><use href="#extend"/></svg>延伸</button>
    <button class="tool"><svg class="ico"><use href="#trim"/></svg>修剪</button><i class="sep"></i>
    <button class="tool"><svg class="ico"><use href="#break"/></svg>打断</button>
    <button class="tool"><svg class="ico"><use href="#merge"/></svg>合并</button>
    <button class="tool" disabled><svg class="ico"><use href="#split"/></svg>分割</button><i class="sep"></i>
    <button class="tool tight"><svg class="ico"><use href="#align"/></svg>对齐<i class="caret"></i></button>
    <button class="tool"><svg class="ico"><use href="#offset"/></svg>偏移</button>
    <button class="tool"><svg class="ico"><use href="#stretch"/></svg>拉伸</button><i class="sep"></i>
    <button class="tool" disabled><svg class="ico"><use href="#gripi"/></svg>设置夹点</button>
  </div></div>
  <div class="bar"><div class="group"><i class="grip"></i>
    <label class="combo floor"><select aria-label="楼层"><option>首层</option></select></label>
    <label class="combo"><select aria-label="构件类别"><option>墙</option></select></label>
    <label class="combo"><select aria-label="构件类型"><option>剪力墙</option></select></label>
    <label class="combo"><select aria-label="构件"><option>JLQ-13</option></select></label><i class="sep"></i>
    <button class="tool"><svg class="ico"><use href="#props"/></svg>属性</button>
    <button class="tool"><svg class="ico"><use href="#pen"/></svg>编辑钢筋</button>
    <button class="tool"><svg class="ico"><use href="#list"/></svg>构件列表</button>
    <button class="tool"><svg class="ico"><use href="#pick"/></svg>拾取构件</button>
  </div>
  <div class="group axis"><i class="grip"></i>
    <button class="tool"><svg class="ico"><use href="#twopt"/></svg>两点</button>
    <button class="tool"><svg class="ico"><use href="#grid"/></svg>平行</button>
    <button class="tool"><svg class="ico"><use href="#angle"/></svg>点角<i class="caret"></i></button>
    <button class="tool"><svg class="ico"><use href="#arcaxis"/></svg>三点辅轴<i class="caret"></i></button>
    <button class="tool"><svg class="ico"><use href="#brush"/></svg>删除辅轴</button>
    <button class="tool"><svg class="ico"><use href="#dim"/></svg>尺寸标注<i class="caret"></i></button>
  </div></div>
  <div class="bar"><div class="group"><i class="grip"></i>
    <button class="tool"><svg class="ico"><use href="#arrow"/></svg>选择<i class="caret"></i></button><i class="sep"></i>
    <button class="tool"><svg class="ico"><use href="#line"/></svg>直线</button>
    <button class="tool"><svg class="ico"><use href="#ptlen"/></svg>点加长度</button>
    <button class="tool"><svg class="ico"><use href="#arc"/></svg>三点画弧<i class="caret"></i></button>
    <label class="combo shape"><select aria-label="绘制方式"><option></option></select></label>
    <button class="tool"><svg class="ico"><use href="#rect"/></svg>矩形</button><i class="sep"></i>
    <button class="tool tight"><svg class="ico"><use href="#smart"/></svg>智能布置<i class="caret"></i></button><i class="sep"></i>
    <button class="tool"><svg class="ico"><use href="#wallmod"/></svg>修改墙段属性</button>
    <button class="tool"><svg class="ico"><use href="#elev"/></svg>查改标高</button>
    <button class="tool"><svg class="ico"><use href="#base"/></svg>墙底平齐基础底</button>
    <button class="tool"><svg class="ico"><use href="#base"/></svg>平齐底板</button>
  </div>
  <div class="group stub"><i class="grip"></i></div></div>

  <svg class="canvas" viewBox="170 168 1195 507" preserveAspectRatio="xMinYMin slice" role="img" aria-label="三维视图">
    <g class="red">
      <path d="M170 178.300L1340 193.500M170 276.200L1340 291.500M170 374.300L1365 389.500M170 505.300L1365 520.700M170 538.200L1365 553.700M170 554.200L1365 569.700"/>
      <path d="M270 387L267.300 556M380.700 387L378.500 557M1092.600 168L1087.400 566M1106.600 168L1101.400 566M1162.600 168L1157.400 566M1273.600 168L1268.400 568M1287.600 168L1282.400 568"/>
      <path d="M170 335L198 365L170 379"/>
    </g>
    <path d="M250 168H294L292 386L291 388H247z" fill="#005ab4"/>
    <path d="M294 168H467L464 388L292 386z" fill="#b4b400"/>
    <path d="M467 168H511L508 391H464z" fill="#005ab4"/>
    <path d="M995 168H1040L1038 296L995 295zM1340 168H1366V300L1339 299z" fill="#5a00b4"/>
    <path d="M489 190.500L1006 197V221L488 215z" fill="#adadad"/>
    <path d="M488 215L1006 221L1002 486L484.500 554z" fill="#868686"/>
    <path class="red" d="M485.500 412V446M484.500 490V528M484.500 554V558M1004.500 317V368M1003.500 399V446M1002.500 481V524M1001.500 524V566"/>
    <path d="M510 230v1M509 311v2" stroke="#005ab4"/>
    <g class="green">
      <path d="M198 365L481 669M386.500 569L170 676M393.500 544L381.500 592M995 177l-1 4 1 4"/>
      <circle cx="183" cy="276.500" r="13"/><circle cx="183" cy="372.500" r="13"/><circle cx="183" cy="554.500" r="13"/><circle cx="474" cy="661.500" r="13"/>
    </g>
    <g class="orbit">
      <circle cx="767.500" cy="421.500" r="225"/><circle cx="767.500" cy="196.500" r="14"/><circle cx="542.500" cy="421.500" r="14"/><circle cx="992.500" cy="421.500" r="14"/><circle cx="767.500" cy="646.500" r="14"/>
    </g>
    <g class="labels">
      <text x="183" y="281">A</text><text x="183" y="377">A</text><text x="182" y="559">A1</text><text x="474" y="666">2</text>
      <text transform="translate(284 674) rotate(-31)">3000</text>
    </g>
    <path d="M170 276.200h26M170 374.300h26M170 554.200h26" class="red"/>
    <path d="M225 625V600" stroke="#0080ff" stroke-width="4"/><path d="M221 601l4-9 4 9z" fill="#0080ff"/><path d="M222 595l3-7 3 7z" fill="#00f000"/>
    <path d="M225 625H262" stroke="red" stroke-width="4"/><path d="M262 621v9l12-4.500z" fill="red"/><path d="M224 624h2v2h-2z" fill="#0f0"/>
    <path d="M211 586.500h10l-10 10h10" fill="none" stroke="#0080ff"/><path d="M234 590l5 5 5-5M239 595v5" fill="none" stroke="#0f0"/><path d="M262 610l9 9M271 610l-9 9" stroke="red"/>
  </svg>

  <div class="bar snapbar">
    <div class="group"><i class="grip"></i>
      <button class="tool"><svg class="ico"><use href="#ortho"/></svg>正交</button>
      <button class="tool on"><svg class="ico"><use href="#snap"/></svg>对象捕捉</button>
      <button class="tool"><svg class="ico"><use href="#dyn"/></svg>动态输入</button></div>
    <div class="group next"><i class="grip"></i>
      <button class="tool"><svg class="ico"><use href="#cross"/></svg>交点</button>
      <button class="tool on"><svg class="ico"><use href="#perp"/></svg>垂点</button>
      <button class="tool on"><svg class="ico"><use href="#mid"/></svg>中点</button>
      <button class="tool"><svg class="ico"><use href="#vertex"/></svg>顶点</button>
      <button class="tool"><svg class="ico"><use href="#coord"/></svg>坐标</button></div>
    <div class="group next"><i class="grip"></i>
      <label class="combo off"><select aria-label="偏移方式"><option>不偏移</option></select></label><i class="sep"></i>
      <label class="num">X=<span class="spin"><input value="0" disabled><i></i></span>mm</label>
      <label class="num">Y=<span class="spin"><input value="0" disabled><i></i></span>mm</label><i class="sep"></i>
      <label class="rot"><input type="checkbox">旋转</label>
      <label class="num"><span class="spin wide"><input value="0.000" aria-label="旋转角度" disabled><i></i></span>°</label></div>
  </div>
</main>
</div>

<footer class="status">
  <span class="p1">X=75954 Y=5337</span><span class="p2"><em>层高</em>:4.5m</span><span class="p3"><em>底标高</em>:-0.05m</span><span class="p4">0</span><span class="p5"></span><span class="p6">194.5 FPS</span>
</footer>

<nav class="taskbar">
  <button class="start" aria-label="开始"><svg viewBox="0 0 16 16"><path d="M0 2.300L6.500 1.400V7.500H0zM7.500 1.200L16 0v7.500H7.500zM0 8.500h6.500v6.100L0 13.700zM7.500 8.500H16V16l-8.500-1.200z" fill="#fff"/></svg></button>
  <label class="search"><svg class="cort" viewBox="0 0 22 22"><circle cx="11" cy="11" r="9" fill="none" stroke="#111" stroke-width="3"/></svg><input placeholder="在这里输入你要搜索的内容"><svg class="mic" viewBox="0 0 14 18"><path d="M4.500 1.500h5v9h-5zM2 7v6h10V7M7 13v4M4 17h6" fill="none" stroke="#333" stroke-width="1.200"/></svg></label>
  <button class="app-btn" aria-label="任务视图"><svg viewBox="0 0 24 24"><path d="M4 5V7.500h11V5M4 19v-2.500h11V19M4.500 9.500h10v5h-10zM18.500 5v3M18.500 13v7M18.500 9v2" fill="none" stroke="#eee" stroke-width="1.500"/></svg></button>
  <button class="app-btn" aria-label="浏览器"><svg viewBox="0 0 24 24"><path d="M12 12H6.500A4.800 4.800 0 1 1 12 5.500zM12 12V6.500A4.800 4.800 0 1 1 18.500 12zM12 12h5.500A4.800 4.800 0 1 1 12 18.500zM12 12v5.500A4.800 4.800 0 1 1 5.500 12z" fill="#dcdcdc"/><path d="M12 12Q8 13 5 11M12 12q-1-4 1-7M12 12q4-1 7 1M12 12q1 4-1 7" fill="none" stroke="#05141a"/></svg></button>
  <button class="app-btn" aria-label="IE"><svg viewBox="0 0 24 24"><path d="M6 13h13.500c0-9-14-9-14 0 0 8 11 8 13 3" fill="none" stroke="#e8e8e8" stroke-width="3.200"/><path d="M12 4q9-4 10-1 0 2-2 5M5 12q-5 9-1 10 3 1 8-2" fill="none" stroke="#e8e8e8" stroke-width="1.500"/></svg></button>
  <button class="app-btn" aria-label="助手"><svg class="big" viewBox="0 0 28 28"><path d="M12 15c1-2 4-1 3 1-1 3-6 2-6-1 0-5 7-6 9-2 3 6-3 10-8 9-8-2-8-14 2-15M17 22C5 29-1 13 9 7" fill="none" stroke="#ddd" stroke-width="1.300"/><path d="M21 0q4 0 4 6l3 4H16l2-4q0-6 3-6zM20 11h3v2h-3z" fill="#e0a41d"/></svg></button>
  <button class="app-btn run" aria-label="广联达"><svg viewBox="0 0 24 24"><use href="#logo"/></svg></button>
  <button class="app-btn run" aria-label="PDF"><svg viewBox="0 0 24 24"><rect x="1" y="1" width="22" height="22" rx="3" fill="#c7671b" stroke="#a79c95" stroke-width="2"/><text x="12" y="16" text-anchor="middle" class="pdf">PDF</text></svg></button>
  <button class="app-btn run" aria-label="便笺"><svg viewBox="0 0 24 24"><rect width="24" height="24" rx="3" fill="#f5a623"/><path d="M2 2h20v4L8 22H2z" fill="#ffcc45"/><path d="M4 7l11-2 3 14-13 2z" fill="#fff"/><path d="M7 10l6-1M7 13l6-1M8 17l5-1" stroke="#777"/><path d="M20 3l-7 11-1 3 3-2 7-11z" fill="#a63c1e"/></svg></button>
  <div class="linkscroll"><i class="chev up"></i><i class="chev dn"></i></div>
  <a class="links" href="#">链接</a>
  <button class="people" aria-label="人脉"><svg viewBox="0 0 18 18" fill="none" stroke="#fff" stroke-width="1.300"><circle cx="6" cy="9" r="2.500"/><path d="M2 16q0-4 4-4t4 4"/><circle cx="12" cy="4.500" r="2.500"/><path d="M10 8q5-2 6 3"/></svg></button>
  <div class="cpu"><span>34%</span><span>CPU使用</span></div>
  <div class="tray">
    <svg viewBox="0 0 16 16"><path d="M3 10l5-5 5 5"/></svg>
    <svg viewBox="0 0 16 16"><path d="M8 2q4 1 4 6l2 4H2l2-4q0-5 4-6zM7 14h2" fill="#fff"/></svg>
    <svg viewBox="0 0 16 16"><path d="M5 6h9v6H5zM15 8v2M1 2v3h4V2M3 5v5h2M2 1v2M4 1v2"/><path d="M7 8h5v2H7z" fill="#fff"/></svg>
    <svg viewBox="0 0 16 16"><path d="M2 13Q3 4 14 3M5 14q1-7 9-8M8 14q1-4 6-5M11 14q1-2 3-2"/></svg>
    <svg viewBox="0 0 16 16"><path d="M1 6h2l4-4v12l-4-4H1zM10 6l4 4M14 6l-4 4"/></svg>
  </div>
  <svg class="kb" viewBox="0 0 24 14"><path d="M1 1h22v12H1z"/><path d="M3 4h18M3 7h18" stroke-dasharray="2 1"/><path d="M3 10.500h2M7 10.500h10M19 10.500h2"/></svg>
  <span class="ime">中</span>
  <div class="clock"><span>11:53</span><span>2018/9/28</span></div>
  <button class="notif" aria-label="通知"><svg viewBox="0 0 26 26"><path d="M2 2h16v12H9l-4 4v-4H2z" fill="#fff"/><path d="M5 5h10M5 8h10M5 11h6" stroke="#222"/><circle cx="17" cy="17" r="8" fill="#333" stroke="#888"/><text x="17" y="21" text-anchor="middle" class="cnt">1</text></svg></button>
  <i class="desk"></i>
</nav>
</div>
</body>
</html>
```
FILE: styles.css
```css
* { box-sizing: border-box; }
body { margin: 0; font: 12px/16px "Noto Sans", "Noto Sans CJK SC", sans-serif; color: #000; background: #f0f0f0; }
button, input, select { font: inherit; color: inherit; margin: 0; padding: 0; border: 0; background: none; border-radius: 0; }
h1, h2 { margin: 0; font: inherit; }
a { color: inherit; text-decoration: none; }
em, i, b { font-style: normal; font-weight: normal; }
svg { display: block; flex: none; }
.sprite { position: absolute; width: 0; height: 0; }
.app { height: 100vh; display: flex; flex-direction: column; overflow: hidden; }
.ico { width: 16px; height: 16px; flex: none; }

.titlebar { position: relative; flex: none; display: flex; align-items: center; height: 23px; padding-left: 2px; gap: 5px; background: #fff; }
.titlebar h1 { flex: 1; display: flex; gap: 30px; white-space: nowrap; font: 13px/16px Roboto, "Noto Sans CJK SC", sans-serif; }
.badge { position: absolute; left: 716px; bottom: 4px; width: 49px; height: 49px; border-radius: 50%; border: 2px solid #8f9a92; background: linear-gradient(#35b558, #4fd06a); box-shadow: 0 2px 6px #0006; color: #fff; font-weight: 600; text-align: center; padding-top: 28px; line-height: 14px; }
.winbtns { display: flex; padding-right: 2px; }
.winbtns button { width: 46px; height: 20px; display: grid; place-items: center; }
.winbtns svg { width: 12px; height: 12px; fill: none; stroke: #000; }

.bar { display: flex; align-items: stretch; flex: none; height: 28px; padding: 0 0 2px 1px; white-space: nowrap; }
.group { display: flex; align-items: center; border-radius: 2px; background: linear-gradient(#fcfcfc, #efefef); padding-right: 2px; }
.menubar { height: 30px; padding: 1px 0; justify-content: flex-end; gap: 2px; }
.tip { width: 187px; justify-content: center; color: #2c6b00; }
.account { width: 240px; }
.mainbar { height: 31px; padding-left: 0; gap: 2px; }
.file { width: 151px; padding-left: 1px; }
.calc { width: 550px; }
.view { flex: 1; }
.axis { margin-left: 74px; }
.stub { width: 30px; margin-left: 2px; }
.next { margin-left: 1px; }
.more { margin-left: auto; align-self: flex-start; width: 14px; font-size: 14px; font-weight: 600; line-height: 16px; text-align: center; }

.tool { flex: none; display: flex; align-items: center; gap: 4px; height: 23px; padding: 0 2px 0 3px; border: 1px solid transparent; }
.tool:disabled { color: #838383; }
.tool.on { border-color: #0078d7; background: #dfecf7; }
.tool.tight { gap: 3px; }
.caret { flex: none; margin: 0 0 0 2px; border: 3px solid transparent; border-top-color: #000; border-bottom: 0; }
.tight .caret { margin: 0; }
.sep { flex: none; width: 1px; height: 16px; margin: 0 1px 0 4px; background: #b4b4b4; }
.file .sep { height: 24px; }
.grip { flex: none; width: 2px; height: 14px; margin: 0 1px 0 3px; background: repeating-linear-gradient(#b4b4b4 0 2px, transparent 2px 4px); }

.combo { position: relative; flex: none; display: flex; align-items: center; width: 70px; height: 23px; margin-left: 2px; background: #fff; }
.combo select { appearance: none; flex: 1; min-width: 0; height: 22px; padding-left: 2px; }
.combo::after { content: ""; position: absolute; right: 0; top: 0; width: 11px; height: 23px; background: linear-gradient(#000, #000) 2px 10px / 5px 1px no-repeat, linear-gradient(#000, #000) 3px 11px / 3px 1px no-repeat, linear-gradient(#000, #000) 4px 12px / 1px 1px no-repeat, #f3f3f3; }
.combo.floor { width: 58px; }
.combo.shape { width: 56px; }
.combo.off { width: 59px; }
.combo.with-icon { width: 62px; margin-left: 0; padding-left: 3px; }
.with-icon select { padding-left: 3px; }

.body { flex: 1; min-height: 0; display: flex; }
.side { flex: none; width: 165px; display: flex; flex-direction: column; font-family: "Noto Sans CJK SC", sans-serif; }
.side-head { display: flex; align-items: center; gap: 8px; height: 15px; padding-right: 4px; background: #0054e3; color: #fff; font-size: 13px; line-height: 14px; }
.side-head h2 { flex: 1; }
.side-head svg { width: 10px; height: 10px; fill: none; stroke: #fff; }
.sect { flex: none; height: 23px; background: #f0f0f0; border: 1px solid #a8a8a8; }
.sect + .sect { border-top: 0; }
.expand { flex: none; display: flex; align-items: center; gap: 4px; height: 27px; padding-left: 6px; background: linear-gradient(#fff, #ededed); border: 1px solid #a8a8a8; border-width: 0 1px; }
.expand svg { width: 18px; height: 16px; }
.treebox { flex: 1; min-height: 0; display: flex; flex-direction: column; margin-left: 1px; border: 2px solid #8c9096; border-right-width: 1px; background: #fff; padding-right: 3px; }
.treerow { flex: 1; min-height: 0; display: flex; }
.tree, .sub { list-style: none; margin: 0; padding: 0; }
.tree { flex: 1; min-width: 0; overflow: hidden; white-space: nowrap; }
.node { display: flex; align-items: center; height: 16px; gap: 5px; padding-left: 8px; }
.node svg { width: 15px; margin-left: 2px; }
.tw { width: 8px; height: 16px; display: grid; place-items: center; }
.tw::before, .chev::before { content: ""; width: 6px; height: 6px; border: solid #a0a0a0; border-width: 2px 2px 0 0; transform: rotate(45deg); }
.tw.down::before { border-color: #333; transform: rotate(135deg); }
.sub { margin-left: 12px; background: repeating-linear-gradient(#808080 0 1px, transparent 1px 2px) 0 0 / 1px 100% no-repeat; padding-left: 19px; }
.sub li { display: flex; align-items: center; height: 16px; }
.sub li:not(:last-child) { background: repeating-linear-gradient(#808080 0 1px, transparent 1px 2px) 0 0 / 1px 100% no-repeat; }
.sub li::before { content: ""; width: 11px; height: 9px; align-self: flex-start; border: dotted #808080; border-width: 0 0 1px 1px; }
.sub li span { padding: 0 3px; line-height: 16px; }
.sub b { font: 10px/16px "Liberation Mono", monospace; }
.sel span { background: #d9d9d9; }
.chev { display: grid; place-items: center; width: 15px; height: 17px; }
.chev::before { border-color: #444; }
.chev.up::before { transform: rotate(-45deg); }
.chev.dn::before { transform: rotate(135deg); }
.chev.lf::before { transform: rotate(-135deg); }
.vscroll { flex: none; width: 15px; display: flex; flex-direction: column; background: #f0f0f0; }
.vscroll .track { flex: 1; padding-top: 49px; }
.vscroll .thumb { height: 74%; background: #cdcdcd; }
.hscroll { flex: none; display: flex; height: 18px; background: #f0f0f0; padding: 1px 18px 1px 1px; }
.hscroll .track { flex: 1; padding: 0 6px 0 2px; }
.hscroll .thumb { height: 15px; background: #cdcdcd; }

.main { flex: 1; min-width: 0; display: flex; flex-direction: column; margin-left: 5px; }
.canvas { flex: 1; min-height: 0; width: calc(100% - 1px); background: #000; shape-rendering: crispEdges; }
.red { fill: none; stroke: #f00; }
.green { fill: none; stroke: #008000; }
.orbit { fill: none; stroke: #fff; stroke-opacity: .45; }
.labels { fill: #e4e4e4; font: 14px "Liberation Sans", sans-serif; text-anchor: middle; }
.snapbar { height: 31px; }
.num { display: flex; align-items: center; gap: 3px; margin-left: 2px; color: #6d6d6d; }
.num + .num { margin-left: 4px; }
.spin { display: flex; align-items: center; width: 58px; height: 23px; border: 1px solid #7a7a7a; }
.spin.wide { width: 68px; }
.spin input { flex: 1; min-width: 0; text-align: right; }
.spin i { width: 5px; height: 15px; margin: 0 5px 0 10px; background: conic-gradient(from 135deg at 50% 0, #555 0 90deg, transparent 0) 0 0 / 5px 3px no-repeat, conic-gradient(from -45deg at 50% 100%, #555 0 90deg, transparent 0) 0 100% / 5px 3px no-repeat; }
.rot { display: flex; align-items: center; gap: 8px; margin-left: 2px; }
.rot input { appearance: none; width: 12px; height: 12px; border: 1px solid #999; }
.rot + .num { margin-left: 4px; }

.status { flex: none; display: flex; gap: 2px; height: 22px; padding-top: 2px; background: #f0f0f0; font: 10px/18px "Liberation Mono", "Noto Sans CJK SC", monospace; }
.status em { font: 12px/18px "Noto Sans CJK SC", sans-serif; }
.status span { height: 20px; border: 1px solid #d0d0d0; padding-left: 1px; background: linear-gradient(#fff, #f3f3f3); white-space: nowrap; }
.p1 { width: 148px; } .p2 { width: 78px; } .p3 { width: 98px; } .p4 { width: 48px; } .p5 { flex: 1; } .p6 { width: 70px; }

.taskbar { flex: none; display: flex; align-items: center; height: 40px; background: #05141a; color: #fff; }
.taskbar button { display: grid; place-items: center; height: 40px; flex: none; }
.start { width: 48px; background: #020609; }
.start svg { width: 16px; height: 16px; }
.search { flex: none; width: 344px; height: 40px; display: flex; align-items: center; background: #f2f2f2; padding: 0 13px 0 9px; }
.search input { flex: 1; font-size: 14px; margin-left: 9px; color: #333; outline: 0; }
.search input::placeholder { color: #444; opacity: 1; }
.cort { width: 22px; height: 22px; }
.mic { width: 14px; height: 18px; }
.app-btn { width: 51px; }
.app-btn svg { width: 24px; height: 24px; }
.app-btn .big { width: 28px; height: 28px; }
.app-btn.run { width: 49px; background: linear-gradient(#76b9ed, #76b9ed) center bottom / 40px 2px no-repeat; }
.pdf { fill: #ffe3c8; font: bold 9px "Liberation Sans", sans-serif; }
.linkscroll { margin-left: auto; width: 17px; height: 40px; background: #f0f0f0; display: flex; flex-direction: column; justify-content: space-between; align-items: center; }
.links { width: 44px; text-align: center; }
.people { width: 44px; }
.people svg { width: 18px; height: 18px; }
.cpu, .clock { display: flex; flex-direction: column; gap: 2px; width: 81px; text-align: center; }
.tray { display: flex; gap: 8px; padding: 0 2px; }
.tray svg { width: 16px; height: 16px; fill: none; stroke: #fff; stroke-width: 1.2; }
.kb { width: 24px; height: 14px; fill: none; stroke: #fff; margin: 0 5px; }
.ime { width: 24px; text-align: center; font-size: 13px; }
.clock { margin-left: 30px; }
.notif { width: 40px; }
.notif svg { width: 26px; height: 26px; }
.cnt { fill: #fff; font: bold 11px "Liberation Sans", sans-serif; }
.desk { width: 5px; height: 40px; margin-left: 4px; border-left: 1px solid #555; }
```
